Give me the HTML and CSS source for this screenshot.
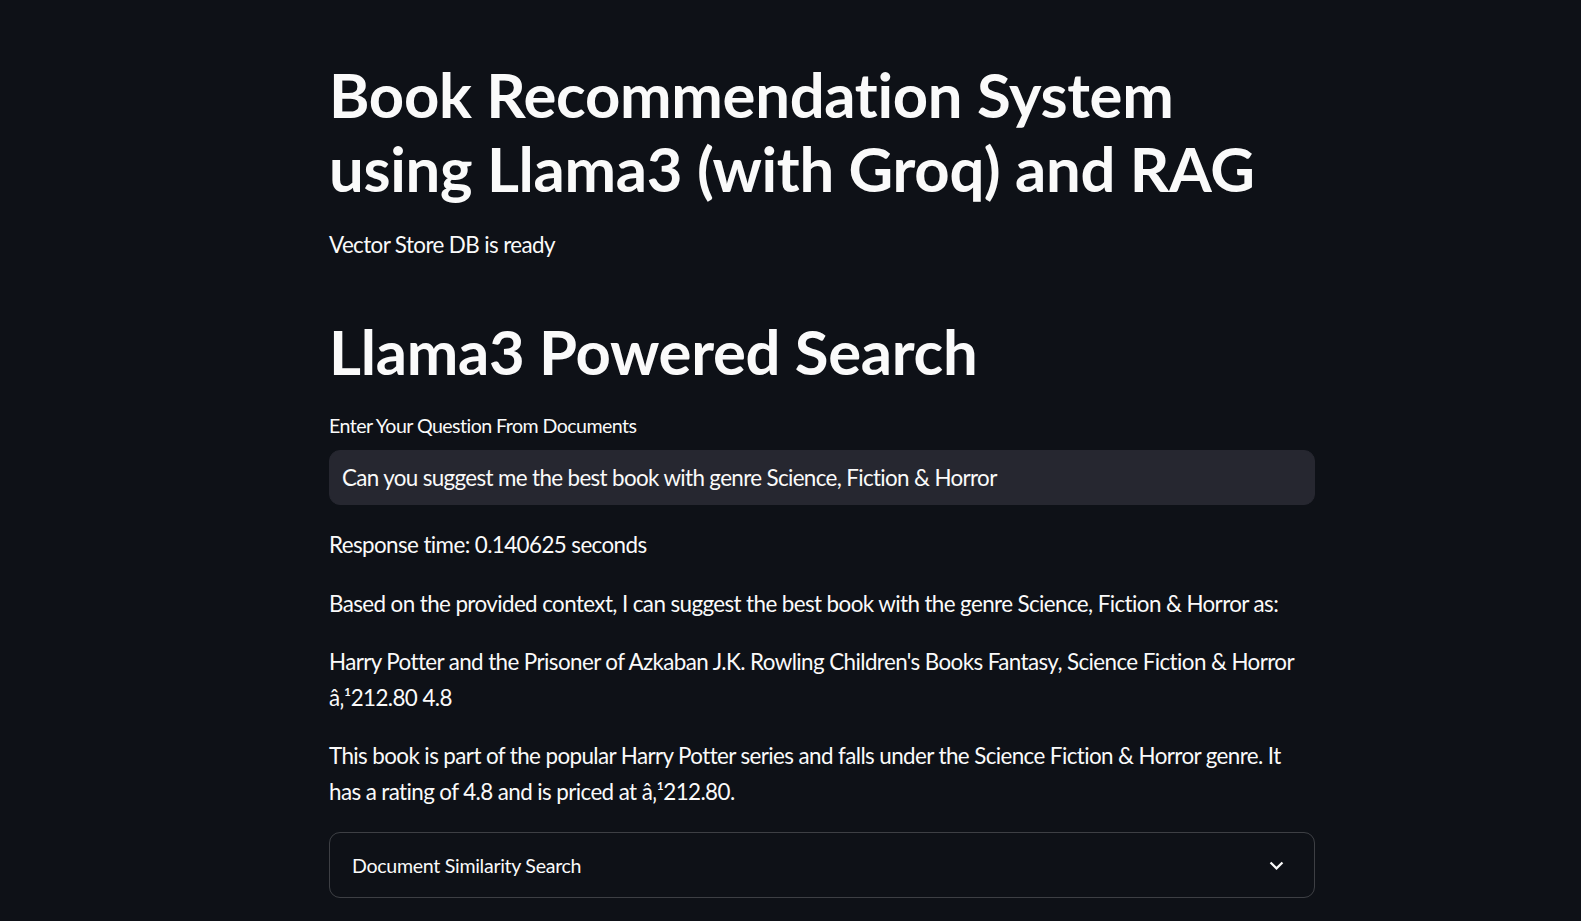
FILE: index.html
```html
<!DOCTYPE html>
<html lang="en">
<head>
<meta charset="utf-8">
<title>Book Recommendation System</title>
<link rel="stylesheet" href="styles.css">
</head>
<body>
<main class="app">
  <div class="block">
    <h1 class="title">Book Recommendation System using Llama3 (with Groq) and RAG</h1>
    <p class="text">Vector Store DB is ready</p>
    <h1 class="title">Llama3 Powered Search</h1>
    <div class="field">
      <label class="label" for="q">Enter Your Question From Documents</label>
      <input class="input" id="q" type="text" value="Can you suggest me the best book with genre Science, Fiction &amp; Horror">
    </div>
    <p class="text">Response time: 0.140625 seconds</p>
    <p class="text">Based on the provided context, I can suggest the best book with the genre Science, Fiction &amp; Horror as:</p>
    <p class="text">Harry Potter and the Prisoner of Azkaban J.K. Rowling Children's Books Fantasy, Science Fiction &amp; Horror â‚¹212.80 4.8</p>
    <p class="text">This book is part of the popular Harry Potter series and falls under the Science Fiction &amp; Horror genre. It has a rating of 4.8 and is priced at â‚¹212.80.</p>
    <details class="expander">
      <summary class="summary">
        <span class="summary-text">Document Similarity Search</span>
        <svg class="chevron" viewBox="0 0 24 24" width="27" height="27" aria-hidden="true"><path d="M7.41 8.59L12 13.17l4.59-4.58L18 10l-6 6-6-6 1.41-1.41z" fill="#fafafa"/></svg>
      </summary>
    </details>
  </div>
</main>
</body>
</html>
```
FILE: styles.css
```css
html, body {
  margin: 0;
  padding: 0;
  background: #0e1117;
  color: #fafafa;
  font-family: "Lato", "Noto Sans", sans-serif;
}

.app {
  min-height: 921px;
  overflow: hidden;
}

.block {
  width: 986px;
  margin-left: 329px;
  padding-top: 57px;
  display: flex;
  flex-direction: column;
  gap: 22.4px;
}

.title {
  margin: 0;
  font-size: 61.6px;
  line-height: 74px;
  font-weight: 700;
  letter-spacing: -0.3px;
}

.text + .title {
  margin-top: 28px;
}

.text {
  margin: 0;
  font-size: 22.4px;
  line-height: 35.84px;
  letter-spacing: -0.6px;
}

.field {
  display: flex;
  flex-direction: column;
  gap: 9px;
}

.label {
  font-size: 19.6px;
  line-height: 31px;
  letter-spacing: -0.55px;
}

.input {
  box-sizing: border-box;
  height: 55px;
  width: 100%;
  border: 1px solid #262730;
  border-radius: 11px;
  background: #262730;
  color: #fafafa;
  font-family: inherit;
  font-size: 22.4px;
  letter-spacing: -0.65px;
  padding: 0 12px;
  outline: none;
}

.expander {
  border: 1px solid rgba(250, 250, 250, 0.2);
  border-radius: 11px;
}

.summary {
  list-style: none;
  display: flex;
  align-items: center;
  justify-content: space-between;
  height: 64px;
  padding: 0 24px 0 22px;
  font-size: 19.6px;
  letter-spacing: -0.3px;
  cursor: pointer;
}

.summary::-webkit-details-marker {
  display: none;
}

.chevron {
  display: block;
}
```
